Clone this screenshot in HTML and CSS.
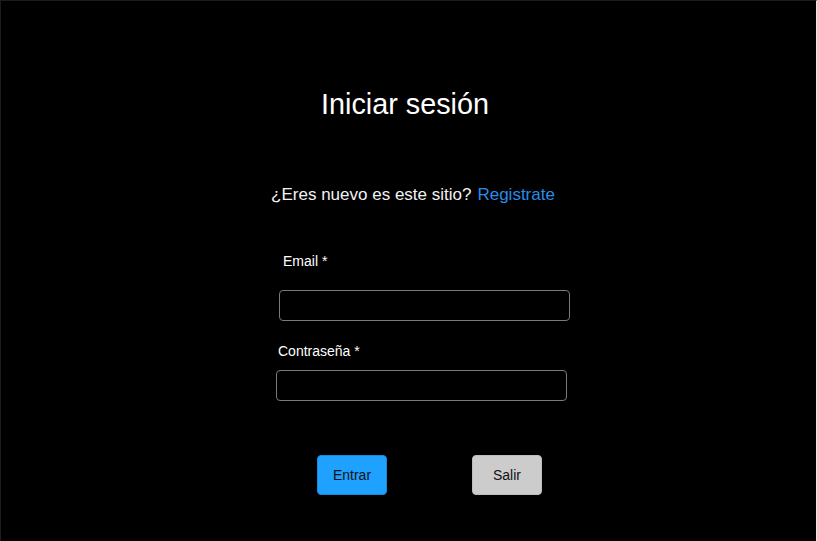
FILE: index.html
```html
<!DOCTYPE html>
<html lang="es">
<head>
<meta charset="utf-8">
<title>Iniciar sesión</title>
<link rel="stylesheet" href="styles.css">
</head>
<body>
<main class="login">
  <h1 class="title">Iniciar sesión</h1>
  <p class="subtitle"><span>¿Eres nuevo es este sitio?</span><a class="link" href="#">Registrate</a></p>
  <form class="form">
    <div class="field field-email">
      <label class="label label-email" for="email">Email *</label>
      <input class="input" id="email" type="email">
    </div>
    <div class="field field-pass">
      <label class="label label-pass" for="pass">Contraseña *</label>
      <input class="input" id="pass" type="password">
    </div>
  </form>
  <div class="actions">
    <button class="btn btn-primary" type="button">Entrar</button>
    <button class="btn btn-secondary" type="button">Salir</button>
  </div>
</main>
</body>
</html>
```
FILE: styles.css
```css
html, body {
  margin: 0;
  padding: 0;
  background: #000;
  height: 100%;
}
body {
  font-family: "Liberation Sans", Arial, sans-serif;
  color: #fff;
}
.login {
  box-sizing: border-box;
  min-height: 100%;
  display: flex;
  flex-direction: column;
  align-items: center;
  padding-top: 87px;
  border-top: 1px solid #1c1c1c;
  border-left: 1px solid #1c1c1c;
  border-right: 1px solid #e8e8e8;
}
.title {
  margin: 0 7px 0 0;
  font-size: 28.8px;
  line-height: 33px;
  font-weight: 400;
  color: #fff;
}
.subtitle {
  margin: 64px 0 0 9px;
  font-size: 17px;
  line-height: 20px;
  display: flex;
  gap: 6px;
  color: #f2f2f2;
}
.link {
  color: #2a8ce6;
  text-decoration: none;
}
.form {
  margin: 48px 0 0 29px;
  width: 294px;
  display: flex;
  flex-direction: column;
}
.field {
  display: flex;
  flex-direction: column;
}
.field-email {
  padding-left: 3px;
}
.field-pass {
  margin-top: 22px;
}
.label {
  font-size: 14px;
  line-height: 16px;
  color: #fff;
}
.label-email {
  padding-left: 4px;
  margin-bottom: 21px;
}
.label-pass {
  padding-left: 2px;
  margin-bottom: 11px;
}
.input {
  box-sizing: border-box;
  width: 291px;
  height: 31px;
  margin: 0;
  background: #000;
  border: 1px solid #7a7a7a;
  border-radius: 4px;
  color: #fff;
  font: 14px "Liberation Sans", Arial, sans-serif;
  padding: 0 8px;
  outline: none;
}
.actions {
  margin: 54px 0 0 42px;
  display: flex;
  gap: 85px;
}
.btn {
  box-sizing: border-box;
  width: 70px;
  height: 40px;
  border-radius: 4px;
  font: 14px "Liberation Sans", Arial, sans-serif;
  color: #111;
  padding: 0;
  cursor: pointer;
}
.btn-primary {
  background: #1ea1ff;
  border: 1px solid #1a86d6;
}
.btn-secondary {
  background: #cccccc;
  border: 1px solid #bdbdbd;
}
```
